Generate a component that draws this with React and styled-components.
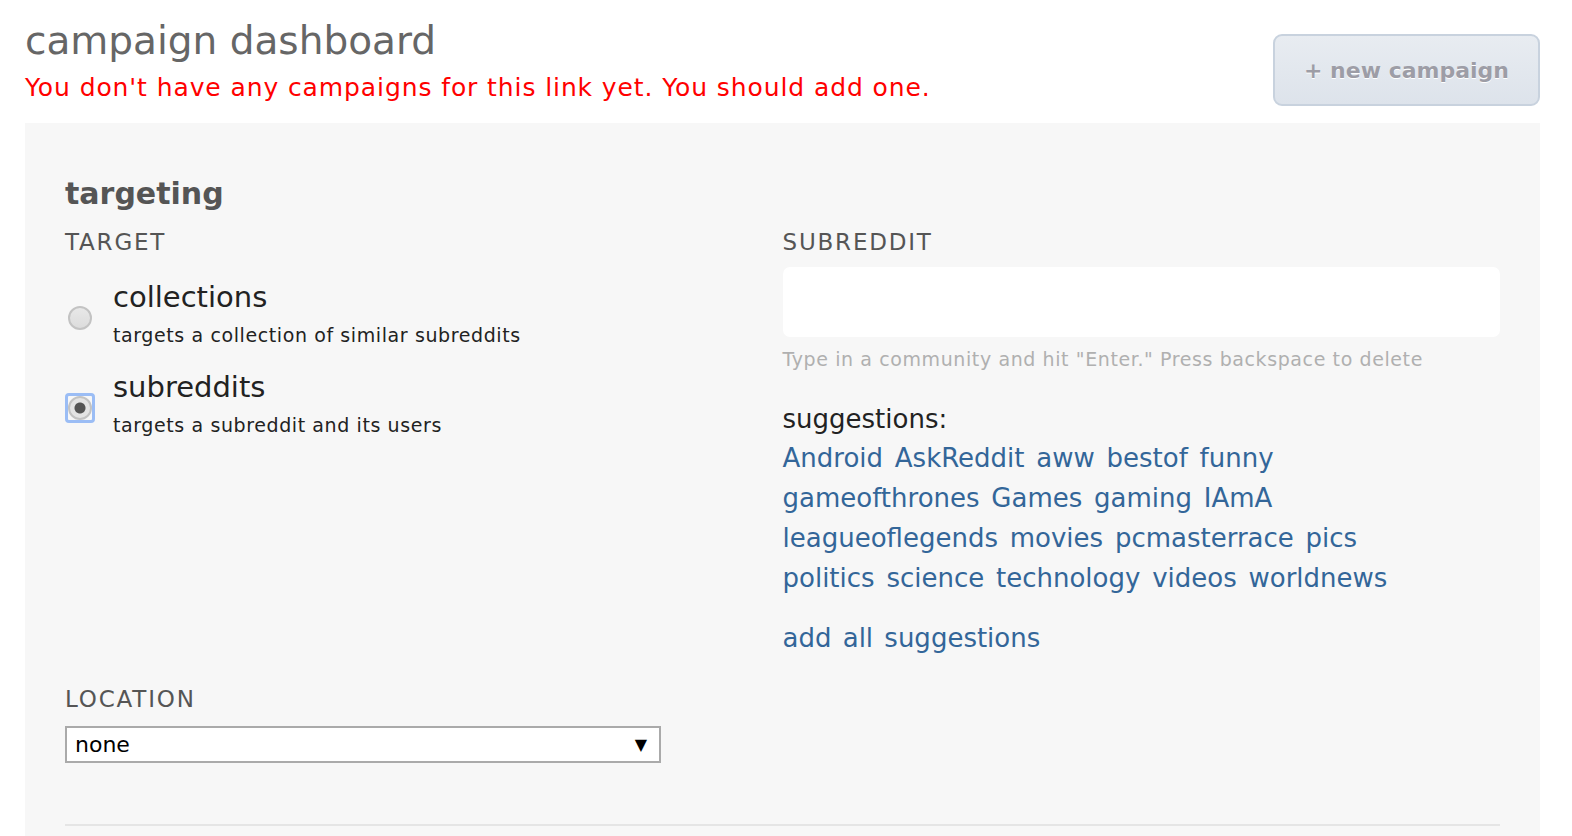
import React, { useState } from "react";
import styled, { createGlobalStyle } from "styled-components";

const GlobalStyle = createGlobalStyle`
  body {
    margin: 0;
    background: #fff;
    font-family: "DejaVu Sans", Verdana, sans-serif;
  }
`;

const suggestionRows = [
  ["Android", "AskReddit", "aww", "bestof", "funny"],
  ["gameofthrones", "Games", "gaming", "IAmA"],
  ["leagueoflegends", "movies", "pcmasterrace", "pics"],
  ["politics", "science", "technology", "videos", "worldnews"],
];

const targetOptions = [
  {
    id: "collection",
    title: "collections",
    desc: "targets a collection of similar subreddits",
  },
  {
    id: "subreddit",
    title: "subreddits",
    desc: "targets a subreddit and its users",
  },
];

const App = () => {
  const [target, setTarget] = useState("subreddit");

  return (
    <Page>
      <GlobalStyle />
      <Header>
        <div>
          <Title>campaign dashboard</Title>
          <Warning>
            You don't have any campaigns for this link yet. You should add one.
          </Warning>
        </div>
        <NewButton>+ new campaign</NewButton>
      </Header>

      <Panel>
        <SectionTitle>targeting</SectionTitle>
        <Columns>
          <Column>
            <Label>TARGET</Label>
            <Options>
              {targetOptions.map((opt) => (
                <Option key={opt.id} onClick={() => setTarget(opt.id)}>
                  <RadioWrap $focused={target === opt.id}>
                    <Radio $checked={target === opt.id} />
                  </RadioWrap>
                  <OptionText>
                    <OptionTitle>{opt.title}</OptionTitle>
                    <OptionDesc>{opt.desc}</OptionDesc>
                  </OptionText>
                </Option>
              ))}
            </Options>
          </Column>

          <Column>
            <Label>SUBREDDIT</Label>
            <TextBox />
            <Hint>Type in a community and hit "Enter." Press backspace to delete</Hint>
            <SuggestTitle>suggestions:</SuggestTitle>
            <SuggestList>
              {suggestionRows.map((row, i) => (
                <SuggestRow key={i}>
                  {row.map((s, j) => (
                    <React.Fragment key={s}>
                      {j > 0 && " "}
                      <SuggestLink>{s}</SuggestLink>
                    </React.Fragment>
                  ))}
                </SuggestRow>
              ))}
            </SuggestList>
            <AddAll>add all suggestions</AddAll>
          </Column>
        </Columns>

        <LocationBlock>
          <Label>LOCATION</Label>
          <Select>
            <span>none</span>
            <Arrow>▼</Arrow>
          </Select>
        </LocationBlock>
        <Divider />
      </Panel>
    </Page>
  );
};

export default App;

const Page = styled.div`
  padding: 0 32px 0 25px;
`;

const Header = styled.div`
  display: flex;
  justify-content: space-between;
  align-items: flex-start;
  height: 123px;
`;

const Title = styled.h1`
  margin: 17px 0 0;
  font-size: 39px;
  font-weight: normal;
  line-height: 48px;
  color: #666;
`;

const Warning = styled.div`
  margin-top: 8px;
  font-size: 25px;
  line-height: 30px;
  color: #ff0000;
  letter-spacing: 0.9px;
`;

const NewButton = styled.button`
  margin-top: 34px;
  width: 267px;
  height: 72px;
  border: 2px solid #c8d2de;
  border-radius: 9px;
  background: linear-gradient(#e8ecf1, #dde3eb);
  font-family: "DejaVu Sans", Verdana, sans-serif;
  font-size: 22px;
  font-weight: bold;
  color: #9d9da6;
  text-shadow: 0 1px 0 #fff;
  cursor: pointer;
`;

const Panel = styled.div`
  background: #f7f7f7;
  padding: 52px 40px 0;
  min-height: 713px;
  box-sizing: border-box;
`;

const SectionTitle = styled.h2`
  margin: 0;
  font-size: 30px;
  line-height: 38px;
  font-weight: bold;
  color: #555;
`;

const Columns = styled.div`
  display: grid;
  grid-template-columns: 1fr 1fr;
  margin-top: 15px;
`;

const Column = styled.div`
  display: flex;
  flex-direction: column;
  align-items: flex-start;
`;

const Label = styled.div`
  font-size: 23px;
  line-height: 28px;
  color: #555;
  letter-spacing: 1.8px;
`;

const Options = styled.div`
  display: flex;
  flex-direction: column;
  gap: 21px;
  margin-top: 23px;
`;

const Option = styled.div`
  display: flex;
  align-items: flex-start;
  cursor: pointer;
`;

const RadioWrap = styled.div`
  width: 30px;
  height: 30px;
  margin-top: 24px;
  margin-right: 18px;
  display: flex;
  align-items: center;
  justify-content: center;
  box-sizing: border-box;
  border-radius: 4px;
  border: ${(p) => (p.$focused ? "3px solid #9bbdf5" : "3px solid transparent")};
`;

const Radio = styled.div`
  width: 24px;
  height: 24px;
  box-sizing: border-box;
  border-radius: 50%;
  border: 2px solid #c3c3c3;
  background: ${(p) =>
    p.$checked
      ? "radial-gradient(circle, #555 0 5px, #e4e4e4 6px)"
      : "linear-gradient(#e8e8e8, #dcdcdc)"};
`;

const OptionText = styled.div`
  display: flex;
  flex-direction: column;
`;

const OptionTitle = styled.div`
  font-size: 29px;
  line-height: 36px;
  color: #222;
`;

const OptionDesc = styled.div`
  margin-top: 7px;
  font-size: 19px;
  line-height: 26px;
  color: #222;
  letter-spacing: 0.6px;
`;

const TextBox = styled.div`
  margin-top: 11px;
  width: 717px;
  height: 70px;
  background: #fff;
  border-radius: 7px;
`;

const Hint = styled.div`
  margin-top: 10px;
  font-size: 19px;
  line-height: 24px;
  color: #b0b0b0;
  letter-spacing: 0.6px;
`;

const SuggestTitle = styled.div`
  margin-top: 31px;
  font-size: 26px;
  line-height: 34px;
  color: #222;
`;

const SuggestList = styled.div`
  margin-top: 2px;
  display: flex;
  flex-direction: column;
`;

const SuggestRow = styled.div`
  font-size: 26px;
  line-height: 40px;
  white-space: nowrap;
  word-spacing: 3.5px;
`;

const SuggestLink = styled.a`
  color: #336699;
  cursor: pointer;
`;

const AddAll = styled.a`
  margin-top: 23px;
  font-size: 26px;
  line-height: 34px;
  color: #336699;
  word-spacing: 3px;
  cursor: pointer;
`;

const LocationBlock = styled.div`
  margin-top: 30px;
  display: flex;
  flex-direction: column;
  align-items: flex-start;
`;

const Select = styled.div`
  margin-top: 13px;
  width: 596px;
  height: 37px;
  box-sizing: border-box;
  border: 2px solid #aaa;
  background: #fff;
  display: flex;
  align-items: center;
  justify-content: space-between;
  padding: 0 12px 0 8px;
  font-size: 22px;
  color: #000;
`;

const Arrow = styled.span`
  font-size: 16px;
`;

const Divider = styled.div`
  margin-top: 61px;
  height: 2px;
  background: #e5e5e5;
`;
